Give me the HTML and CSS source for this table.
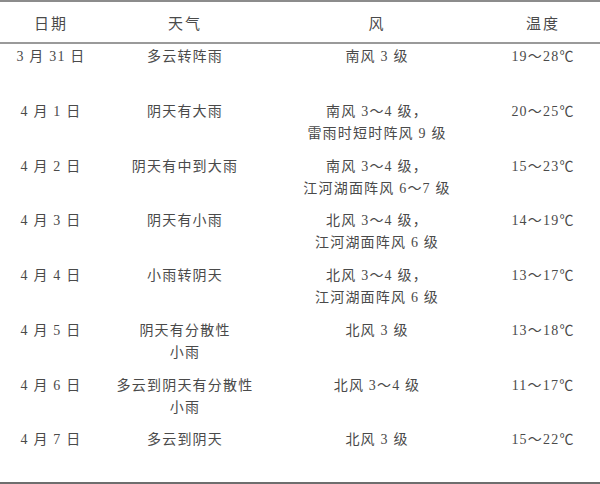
FILE: index.html
```html
<!DOCTYPE html>
<html lang="zh-CN">
<head>
<meta charset="utf-8">
<link rel="stylesheet" href="styles.css">
</head>
<body>
<div class="table">
  <div class="head">
    <div>日期</div><div>天气</div><div>风</div><div>温度</div>
  </div>
  <div class="row"><div>3 月 31 日</div><div>多云转阵雨</div><div>南风 3 级</div><div>19～28℃</div></div>
  <div class="row"><div>4 月 1 日</div><div>阴天有大雨</div><div>南风 3～4 级，<br>雷雨时短时阵风 9 级</div><div>20～25℃</div></div>
  <div class="row"><div>4 月 2 日</div><div>阴天有中到大雨</div><div>南风 3～4 级，<br>江河湖面阵风 6～7 级</div><div>15～23℃</div></div>
  <div class="row"><div>4 月 3 日</div><div>阴天有小雨</div><div>北风 3～4 级，<br>江河湖面阵风 6 级</div><div>14～19℃</div></div>
  <div class="row"><div>4 月 4 日</div><div>小雨转阴天</div><div>北风 3～4 级，<br>江河湖面阵风 6 级</div><div>13～17℃</div></div>
  <div class="row"><div>4 月 5 日</div><div>阴天有分散性<br>小雨</div><div>北风 3 级</div><div>13～18℃</div></div>
  <div class="row"><div>4 月 6 日</div><div>多云到阴天有分散性<br>小雨</div><div>北风 3～4 级</div><div>11～17℃</div></div>
  <div class="row"><div>4 月 7 日</div><div>多云到阴天</div><div>北风 3 级</div><div>15～22℃</div></div>
</div>
</body>
</html>
```
FILE: styles.css
```css
html, body {
  margin: 0;
  padding: 0;
  background: #ffffff;
}
body {
  width: 600px;
  height: 484px;
  overflow: hidden;
  font-family: "Liberation Serif", "Noto Sans CJK SC", serif;
  font-size: 14px;
  color: #4a4a4a;
}
.table {
  border-top: 2px solid #8c8c8c;
  border-bottom: 2px solid #6e6e6e;
  box-sizing: border-box;
  height: 484px;
}
.head, .row {
  display: grid;
  grid-template-columns: 102px 166px 218px 114px;
  text-align: center;
  letter-spacing: 1.2px;
}
.head {
  height: 40px;
  align-items: center;
  border-bottom: 2px solid #9a9a9a;
  font-size: 15px;
  letter-spacing: 2px;
}
.row {
  height: 54.75px;
  box-sizing: border-box;
  padding-top: 2px;
  line-height: 22px;
  align-items: start;
}
```
